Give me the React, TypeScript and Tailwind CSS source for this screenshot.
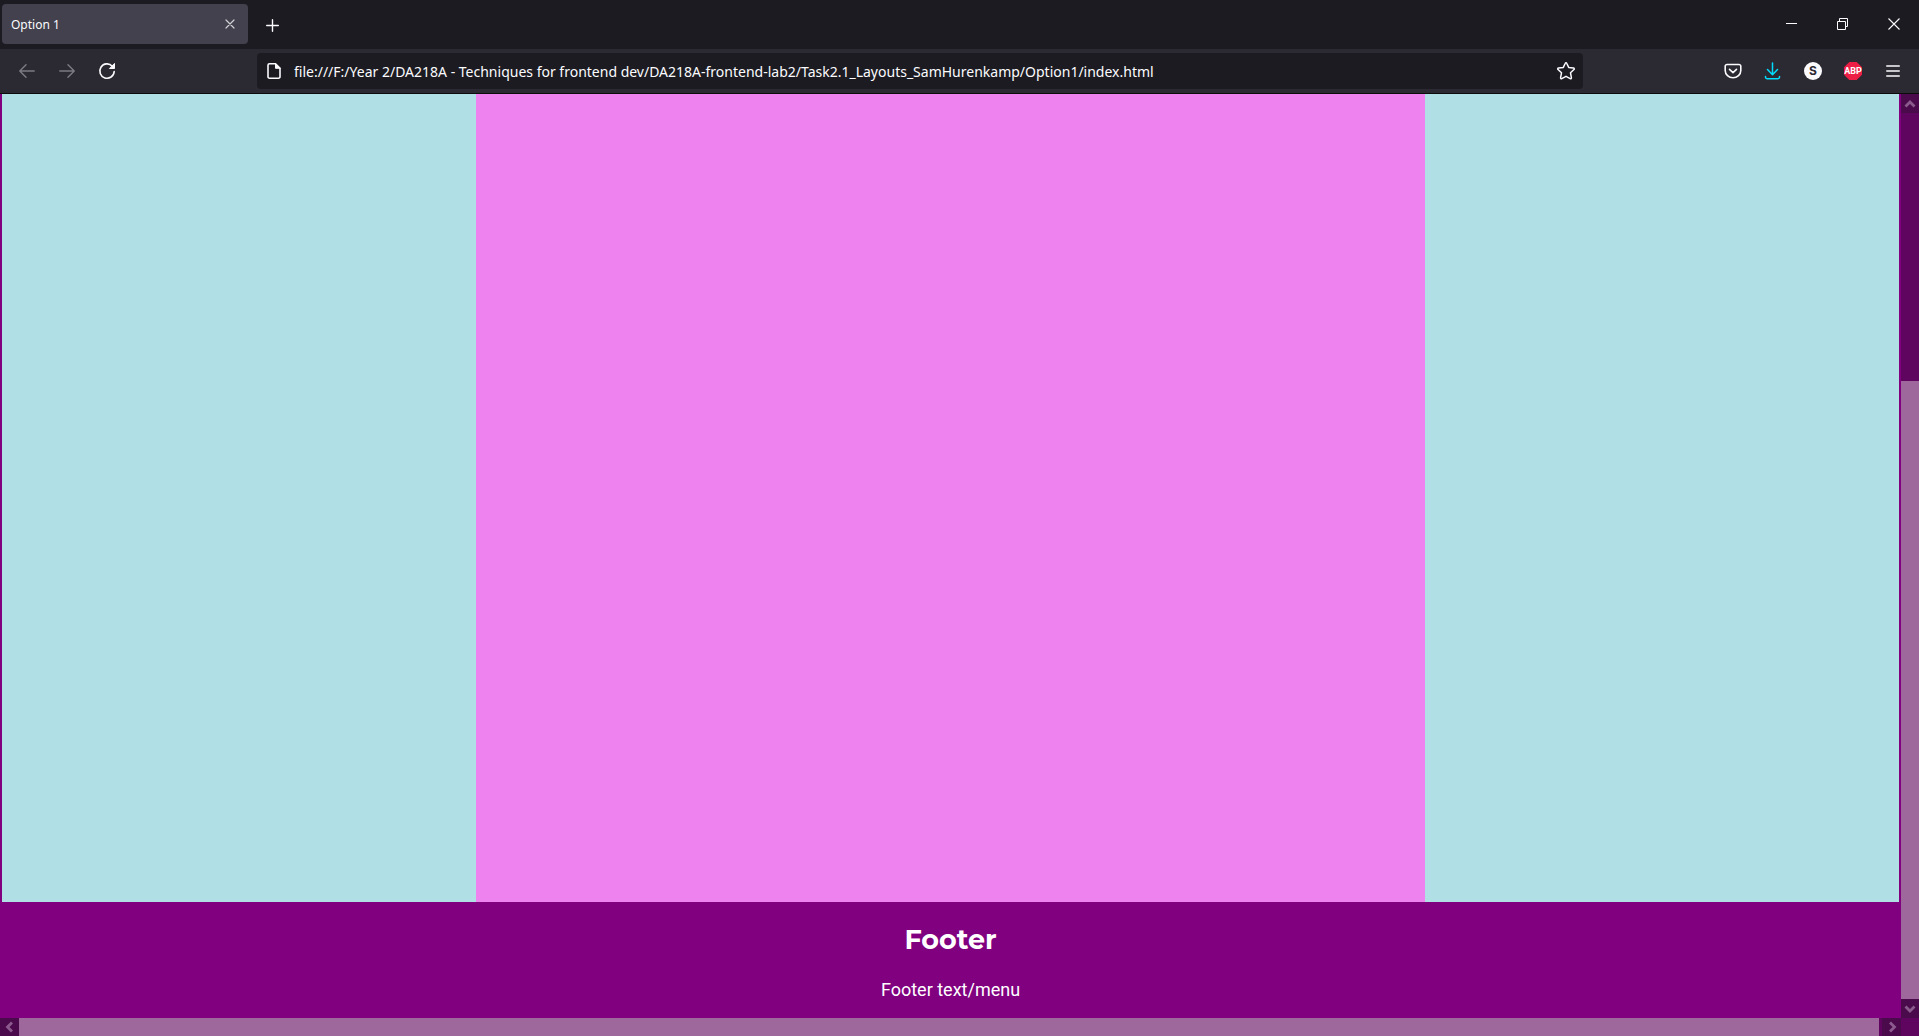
import type { ReactNode } from "react";

function IconButton({ label, className = "", children }: { label: string; className?: string; children: ReactNode }) {
  return (
    <button type="button" aria-label={label} className={`flex h-9 w-10 items-center justify-center ${className}`}>
      {children}
    </button>
  );
}

const stroke = { fill: "none", stroke: "currentColor", strokeLinecap: "round", strokeLinejoin: "round" } as const;

function Chevron({ d }: { d: string }) {
  return (
    <svg width="12" height="12" viewBox="0 0 12 12" fill="none" stroke="currentColor" strokeWidth="2.8" aria-hidden="true">
      <path d={d} />
    </svg>
  );
}

function TabBar() {
  return (
    <header className="flex h-[49px] items-start bg-[#1c1b22]">
      <div className="mt-1 ml-[2px] flex h-10 w-[246px] items-center justify-between rounded bg-[#42414d] pr-[10px] pl-[9px]">
        <span className="pt-[2px] text-xs">Option 1</span>
        <button type="button" aria-label="Close tab" className="flex h-4 w-4 items-center justify-center text-[#d0d0d4]">
          <svg width="10" height="10" viewBox="0 0 10 10" {...stroke} strokeWidth="1.2">
            <path d="M1 1l8 8M9 1l-8 8" />
          </svg>
        </button>
      </div>
      <button type="button" aria-label="Open a new tab" className="mt-[5px] ml-1 flex h-10 w-10 items-center justify-center">
        <svg width="13" height="13" viewBox="0 0 13 13" {...stroke} strokeWidth="1.4">
          <path d="M6.500 .7v11.600M.7 6.500h11.600" />
        </svg>
      </button>
      <div className="ml-auto flex">
        <button type="button" aria-label="Minimize" className="flex h-12 w-[51px] items-center justify-center">
          <svg width="11" height="12" viewBox="0 0 11 12" fill="currentColor">
            <path d="M0 5h11v1H0z" />
          </svg>
        </button>
        <button type="button" aria-label="Restore" className="flex h-12 w-[51px] items-center justify-center">
          <svg width="11" height="12" viewBox="0 0 11 12" fill="none" stroke="currentColor">
            <path d="M.5 3.500h8v8h-8zM2.500 3.500v-3h8v8h-2" />
          </svg>
        </button>
        <button type="button" aria-label="Close window" className="flex h-12 w-[51px] items-center justify-center">
          <svg width="12" height="12" viewBox="0 0 12 12" fill="none" stroke="currentColor" strokeWidth="1.1">
            <path d="M.5.5l11 11M11.500.5l-11 11" />
          </svg>
        </button>
      </div>
    </header>
  );
}

function Toolbar() {
  return (
    <nav aria-label="Browser toolbar" className="flex h-[45px] items-center border-b border-[#0c0c0d] bg-[#2b2a33] pr-[6px] pl-[7px]">
      <IconButton label="Go back" className="text-[#7c7b82]">
        <svg width="16" height="16" viewBox="0 0 16 16" {...stroke} strokeWidth="1.4">
          <path d="M15.200 8H1M7 1.700L.8 8 7 14.300" />
        </svg>
      </IconButton>
      <IconButton label="Go forward" className="text-[#7c7b82]">
        <svg width="16" height="16" viewBox="0 0 16 16" {...stroke} strokeWidth="1.4">
          <path d="M.8 8H15M9 1.700L15.200 8 9 14.300" />
        </svg>
      </IconButton>
      <IconButton label="Reload">
        <svg width="18" height="18" viewBox="0 0 18 18" {...stroke} strokeWidth="1.6">
          <path d="M14.300 4.200A7.200 7.200 0 1 0 16.200 9.500" />
          <path d="M16.500 1.800v4.700h-4.700z" fill="currentColor" strokeWidth="1" />
        </svg>
      </IconButton>
      <div className="mx-[130px] flex h-9 min-w-0 flex-1 items-center rounded bg-[#1c1b22]">
        <svg className="ml-[9px] shrink-0" width="16" height="18" viewBox="0 0 16 18" {...stroke} strokeWidth="1.6" aria-hidden="true">
          <path d="M3.500 1.800h6L14 6.300v8.400a1.500 1.500 0 0 1-1.500 1.500h-9A1.500 1.500 0 0 1 2 14.700V3.300a1.500 1.500 0 0 1 1.500-1.500z" />
          <path d="M9.500 1.800v4.500H14z" fill="currentColor" strokeWidth="1" />
        </svg>
        <input
          aria-label="Address"
          type="text"
          className="ml-3 h-full min-w-0 flex-1 bg-transparent text-sm text-[#fbfbfe] outline-none"
          defaultValue="file:///F:/Year 2/DA218A - Techniques for frontend dev/DA218A-frontend-lab2/Task2.1_Layouts_SamHurenkamp/Option1/index.html"
        />
        <button type="button" aria-label="Bookmark this page" className="flex h-9 w-[34px] items-center justify-center">
          <svg width="20" height="20" viewBox="0 0 20 20" {...stroke} strokeWidth="1.5">
            <path d="M9.300 2.200c.3-.7 1.100-.7 1.400 0l2 4.200 4.800.7c.8.1 1.100.9.500 1.400l-3.500 3.300.9 4.900c.1.800-.5 1.200-1.200.9L10 15.300l-4.200 2.300c-.7.300-1.300-.1-1.200-.9l.9-4.900L2 8.500c-.6-.5-.3-1.300.5-1.400l4.800-.7z" />
          </svg>
        </button>
      </div>
      <IconButton label="Save to Pocket">
        <svg width="18" height="18" viewBox="0 0 18 18" {...stroke} strokeWidth="1.6">
          <path d="M3 2.500h12a1.800 1.800 0 0 1 1.800 1.800v4.200a7.800 7.300 0 0 1-15.600 0V4.300A1.800 1.800 0 0 1 3 2.500z" />
          <path d="M5.500 7.300L9 10.600l3.500-3.300" />
        </svg>
      </IconButton>
      <IconButton label="Downloads" className="text-[#00ddff]">
        <svg width="18" height="18" viewBox="0 0 18 18" {...stroke} strokeWidth="1.5">
          <path d="M8.500 1v11.500M3.500 7.500l5 5.200 5-5.200M1.500 14.500v.5a1.800 1.800 0 0 0 1.800 1.800h10.400a1.800 1.800 0 0 0 1.800-1.800v-.5" />
        </svg>
      </IconButton>
      <IconButton label="S extension">
        <span className="flex h-[18px] w-[18px] items-center justify-center rounded-full bg-[#fbfbfe] font-['Inter',sans-serif] text-xs font-bold text-[#2b2a33]">
          S
        </span>
      </IconButton>
      <IconButton label="Adblock Plus">
        <svg width="18" height="18" viewBox="0 0 18 18" aria-hidden="true">
          <path d="M5.300 0h7.400L18 5.300v7.400L12.700 18H5.300L0 12.700V5.300z" fill="#ed1e45" />
          <text x="9" y="12" textAnchor="middle" fill="#fff" className="font-['Roboto',sans-serif] text-[9px] font-bold">
            ABP
          </text>
        </svg>
      </IconButton>
      <IconButton label="Open application menu">
        <svg width="14" height="12" viewBox="0 0 14 12" {...stroke} strokeWidth="1.3">
          <path d="M.7 1h12.600M.7 6h12.600M.7 11h12.600" />
        </svg>
      </IconButton>
    </nav>
  );
}

const scrollButton = "flex shrink-0 items-center justify-center bg-[#4a0a4b] text-[#8c5b8e]";

export default function App() {
  return (
    <div className="flex min-h-screen flex-col bg-[#800080] font-['Noto_Sans','Open_Sans',sans-serif] text-[#fbfbfe]">
      <TabBar />
      <Toolbar />
      <div className="grid flex-1 grid-cols-[1fr_18px] grid-rows-[1fr_18px]">
        <div className="flex flex-col">
          <div className="mx-[2px] grid flex-1 grid-cols-[1fr_2fr_1fr]">
            <aside className="bg-[#b0e0e6]" />
            <main className="bg-[#ee82ee]" />
            <aside className="bg-[#b0e0e6]" />
          </div>
          <footer className="flex h-[116px] flex-col items-center pt-5 text-white">
            <h2 className="font-['Montserrat','Inter',sans-serif] text-[27px] leading-9 font-bold">Footer</h2>
            <p className="mt-[18px] font-['Roboto',sans-serif] text-lg leading-7">Footer text/menu</p>
          </footer>
        </div>
        <div className="flex flex-col bg-[#5f045f]">
          <button type="button" aria-label="Scroll up" className={`${scrollButton} h-[19px]`}>
            <Chevron d="M1.500 8.500L6 4l4.500 4.500" />
          </button>
          <div className="flex-[268]" />
          <div className="flex-[618] bg-[#9e689d]" />
          <button type="button" aria-label="Scroll down" className={`${scrollButton} h-[19px]`}>
            <Chevron d="M1.500 3.500L6 8l4.500-4.500" />
          </button>
        </div>
        <div className="flex bg-[#5f045f]">
          <button type="button" aria-label="Scroll left" className={`${scrollButton} w-[19px]`}>
            <Chevron d="M8 1.500L3.500 6 8 10.500" />
          </button>
          <div className="mr-[3px] flex-1 bg-[#9e689d]" />
          <button type="button" aria-label="Scroll right" className={`${scrollButton} w-[19px]`}>
            <Chevron d="M4 1.500L8.500 6 4 10.500" />
          </button>
        </div>
        <div className="bg-[#5f045f]" />
      </div>
    </div>
  );
}
